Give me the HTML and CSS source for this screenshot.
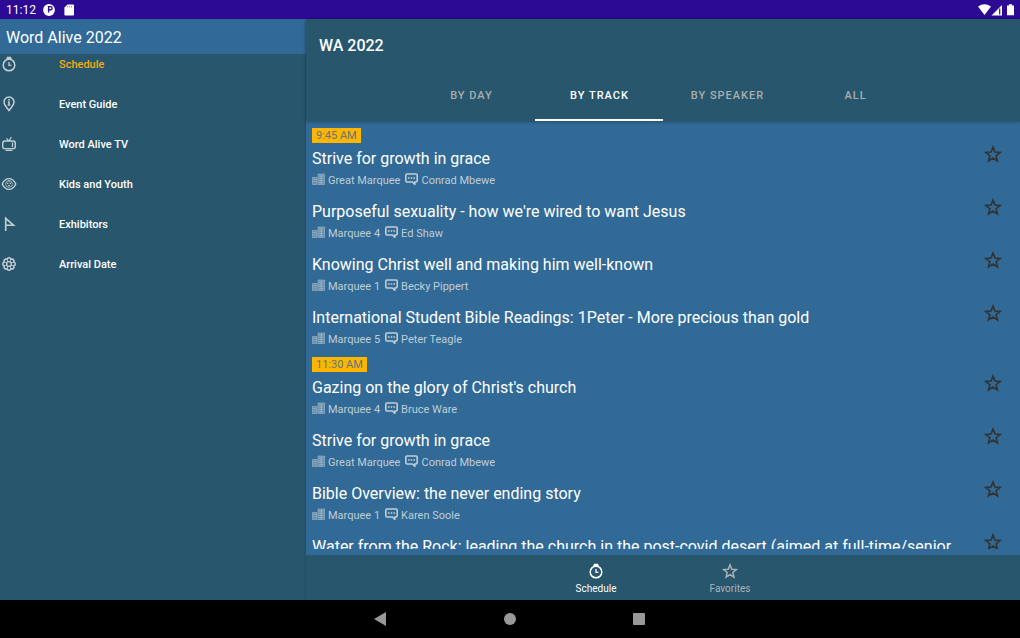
FILE: index.html
```html
<!DOCTYPE html>
<html lang="en">
<head>
  <meta charset="UTF-8">
  <meta name="viewport" content="width=device-width, initial-scale=1">
  <title>Word Alive 2022</title>
  <link rel="stylesheet" href="styles.css">
</head>
<body>

  <!-- ===== ICONS ===== -->
  <svg class="sprite" aria-hidden="true">
    <symbol id="i-clock" viewBox="0 0 16 16">
      <circle cx="8" cy="9" r="5.8" fill="none" stroke="currentColor" stroke-width="1.5"/>
      <path d="M6 .8h4l.8 2.2H5.200z" fill="currentColor"/>
      <path d="M8 6v3.400h2.400" fill="none" stroke="currentColor" stroke-width="1.3"/>
    </symbol>
    <symbol id="i-pin" viewBox="0 0 16 16">
      <path d="M8 14.500C5.600 11.400 3 9 3 6a5 5 0 0 1 10 0c0 3-2.600 5.400-5 8.500z" fill="none" stroke="currentColor" stroke-width="1.5"/>
      <path d="M7.200 3h1.600v1.500H7.200zM6.800 5.300h2v3.400h.6v1H6.600v-1h.6V6.300h-.4z" fill="currentColor"/>
    </symbol>
    <symbol id="i-tv" viewBox="0 0 16 16">
      <rect x="1.7" y="5" width="12.6" height="7.6" rx="2.2" fill="none" stroke="currentColor" stroke-width="1.4"/>
      <path d="M8 5L5.400 2.400M8 5l2.400-4M11.500 6.500v4.600M4.500 14.300h7" fill="none" stroke="currentColor" stroke-width="1.2"/>
    </symbol>
    <symbol id="i-eye" viewBox="0 0 16 16">
      <path d="M1.200 8C3 4.300 5.400 2.600 8 2.600S13 4.300 14.800 8C13 11.700 10.600 13.400 8 13.400S3 11.700 1.200 8z" fill="none" stroke="currentColor" stroke-width="1.4"/>
      <circle cx="8" cy="8" r="3.4" fill="none" stroke="currentColor" stroke-width=".7"/>
      <path d="M6 6.800h1.300v1.300H6zM8.700 6.800H10v1.300H8.700zM7.500 4h1v2h-1zM6.500 9h3L8 10.500z" fill="currentColor"/>
    </symbol>
    <symbol id="i-flag" viewBox="0 0 16 16">
      <path d="M4.700 15V2.300L12.500 9.200H4.700" fill="none" stroke="currentColor" stroke-width="1.6"/>
    </symbol>
    <symbol id="i-flower" viewBox="0 0 16 16">
      <path d="M6 3.200a2.100 2.100 0 0 1 4 0 2.100 2.100 0 0 1 2.800 2.800 2.100 2.100 0 0 1 0 4 2.100 2.100 0 0 1-2.800 2.800 2.100 2.100 0 0 1-4 0 2.100 2.100 0 0 1-2.800-2.800 2.100 2.100 0 0 1 0-4 2.100 2.100 0 0 1 2.800-2.800z" fill="none" stroke="currentColor" stroke-width="1.5"/>
      <circle cx="8" cy="8" r="2.4" fill="none" stroke="currentColor" stroke-width="1.4"/>
      <path d="M6 3.200l1 2.600M10 3.200L9 5.800M12.800 6l-2.600 1M12.800 10l-2.600-1M10 12.800l-1-2.600M6 12.800l1-2.600M3.200 10l2.600-1M3.200 6l2.600 1" stroke="currentColor" stroke-width=".8"/>
    </symbol>
    <symbol id="i-star" viewBox="0 0 24 24">
      <path d="M12 2.800l2.600 6.500 7 .5-5.400 4.500 1.700 6.900-5.900-3.800-5.900 3.800 1.700-6.900L2.400 9.800l7-.5z" fill="none" stroke="currentColor" stroke-width="2.2"/>
    </symbol>
    <symbol id="i-building" viewBox="0 0 13 12">
      <path d="M6 1h6.500v10.500H6zM.5 4.500H5v7H.5z" fill="currentColor" fill-opacity=".35" stroke="currentColor" stroke-opacity=".6" stroke-width=".8"/>
      <path d="M7 3h4.500M7 5.200h4.500M7 7.400h4.500M7 9.600h4.500M1.300 6.500h3M1.300 8.800h3M9.200 1.500v9.500" stroke="currentColor" stroke-opacity=".6" stroke-width=".8"/>
    </symbol>
    <symbol id="i-chat" viewBox="0 0 13 12">
      <path d="M2 1h9a1.200 1.200 0 0 1 1.200 1.200v5.600A1.200 1.200 0 0 1 11 9H9.800v2.300L7.300 9H2A1.200 1.200 0 0 1 .8 7.800V2.200A1.200 1.200 0 0 1 2 1z" fill="none" stroke="currentColor" stroke-width="1.6"/>
      <path d="M3 4.300h1.600v1.500H3zM5.700 4.300h1.600v1.500H5.700zM8.400 4.300H10v1.500H8.400z" fill="currentColor"/>
    </symbol>
  </svg>

  <!-- ===== STATUS BAR ===== -->
  <div class="status-bar">
    <span class="time">11:12</span>
    <svg class="status-icon" viewBox="0 0 12 12">
      <circle cx="6" cy="6" r="5.9" fill="#fff"/>
      <path d="M5.600 8.500V2.600h1.900a1.600 1.600 0 0 1 0 3.200h-1.900" fill="none" stroke="#2c0a94" stroke-width="1.4"/>
    </svg>
    <svg class="status-icon" viewBox="0 0 12 12">
      <path d="M4.500.5h5.700a.8.8 0 0 1 .8.8v9.400a.8.8 0 0 1-.8.8H2.200a.8.8 0 0 1-.8-.8V3.600z" fill="#fff"/>
      <path d="M4.500 2v1.500M6.500 2v1.500M8.500 2v1.500" stroke="#2c0a94" stroke-opacity=".6" stroke-width=".7"/>
    </svg>
    <svg class="signals" viewBox="0 0 38 12">
      <path d="M0 2.500Q6.500-1.800 13 2.500L6.500 11z" fill="#fff"/>
      <path d="M24 1v10.500H13.500z" fill="#fff"/>
      <path d="M21.700 4.500v6" stroke="#2c0a94" stroke-width="1.2"/>
      <path d="M29 1.500h2V.3h3v1.200h2V11.200h-7z" fill="#fff"/>
    </svg>
  </div>

  <div class="app">

    <!-- ===== SIDE MENU ===== -->
    <aside class="sidebar">
      <h1>Word Alive 2022</h1>
      <nav class="menu">
        <a href="#schedule" class="active"><svg><use href="#i-clock"/></svg>Schedule</a>
        <a href="#guide"><svg><use href="#i-pin"/></svg>Event Guide</a>
        <a href="#tv"><svg><use href="#i-tv"/></svg>Word Alive TV</a>
        <a href="#kids"><svg><use href="#i-eye"/></svg>Kids and Youth</a>
        <a href="#exhibitors"><svg><use href="#i-flag"/></svg>Exhibitors</a>
        <a href="#arrival"><svg><use href="#i-flower"/></svg>Arrival Date</a>
      </nav>
    </aside>

    <!-- ===== SCHEDULE ===== -->
    <main class="content">
      <header class="toolbar">
        <h2>WA 2022</h2>
        <div class="tabs" role="tablist">
          <button type="button" role="tab">BY DAY</button>
          <button type="button" role="tab" class="active" aria-selected="true">BY TRACK</button>
          <button type="button" role="tab">BY SPEAKER</button>
          <button type="button" role="tab">ALL</button>
        </div>
      </header>

      <div class="list-area">
        <div class="list">
          <time class="slot">9:45 AM</time>
          <article class="session">
            <div class="info">
              <h3>Strive for growth in grace</h3>
              <p><svg><use href="#i-building"/></svg>Great Marquee<svg class="chat"><use href="#i-chat"/></svg>Conrad Mbewe</p>
            </div>
            <button type="button" class="star" aria-label="Add to favorites"><svg><use href="#i-star"/></svg></button>
          </article>
          <article class="session">
            <div class="info">
              <h3>Purposeful sexuality - how we're wired to want Jesus</h3>
              <p><svg><use href="#i-building"/></svg>Marquee 4<svg class="chat"><use href="#i-chat"/></svg>Ed Shaw</p>
            </div>
            <button type="button" class="star" aria-label="Add to favorites"><svg><use href="#i-star"/></svg></button>
          </article>
          <article class="session">
            <div class="info">
              <h3>Knowing Christ well and making him well-known</h3>
              <p><svg><use href="#i-building"/></svg>Marquee 1<svg class="chat"><use href="#i-chat"/></svg>Becky Pippert</p>
            </div>
            <button type="button" class="star" aria-label="Add to favorites"><svg><use href="#i-star"/></svg></button>
          </article>
          <article class="session">
            <div class="info">
              <h3>International Student Bible Readings: 1Peter - More precious than gold</h3>
              <p><svg><use href="#i-building"/></svg>Marquee 5<svg class="chat"><use href="#i-chat"/></svg>Peter Teagle</p>
            </div>
            <button type="button" class="star" aria-label="Add to favorites"><svg><use href="#i-star"/></svg></button>
          </article>

          <time class="slot">11:30 AM</time>
          <article class="session">
            <div class="info">
              <h3>Gazing on the glory of Christ's church</h3>
              <p><svg><use href="#i-building"/></svg>Marquee 4<svg class="chat"><use href="#i-chat"/></svg>Bruce Ware</p>
            </div>
            <button type="button" class="star" aria-label="Add to favorites"><svg><use href="#i-star"/></svg></button>
          </article>
          <article class="session">
            <div class="info">
              <h3>Strive for growth in grace</h3>
              <p><svg><use href="#i-building"/></svg>Great Marquee<svg class="chat"><use href="#i-chat"/></svg>Conrad Mbewe</p>
            </div>
            <button type="button" class="star" aria-label="Add to favorites"><svg><use href="#i-star"/></svg></button>
          </article>
          <article class="session">
            <div class="info">
              <h3>Bible Overview: the never ending story</h3>
              <p><svg><use href="#i-building"/></svg>Marquee 1<svg class="chat"><use href="#i-chat"/></svg>Karen Soole</p>
            </div>
            <button type="button" class="star" aria-label="Add to favorites"><svg><use href="#i-star"/></svg></button>
          </article>
          <article class="session">
            <div class="info">
              <h3>Water from the Rock: leading the church in the post-covid desert (aimed at full-time/senior</h3>
            </div>
            <button type="button" class="star" aria-label="Add to favorites"><svg><use href="#i-star"/></svg></button>
          </article>
        </div>
      </div>

      <nav class="bottom-nav">
        <a href="#schedule" class="active"><svg><use href="#i-clock"/></svg>Schedule</a>
        <a href="#favorites"><svg><use href="#i-star"/></svg>Favorites</a>
      </nav>
    </main>
  </div>

  <!-- ===== SYSTEM BUTTONS ===== -->
  <div class="system-bar">
    <button type="button" aria-label="Back"><svg viewBox="0 0 14 14"><path d="M12 0v14L0 7z"/></svg></button>
    <button type="button" aria-label="Home"><svg viewBox="0 0 14 14"><circle cx="7" cy="7" r="6"/></svg></button>
    <button type="button" aria-label="Recent apps"><svg viewBox="0 0 14 14"><rect x="1" y="1" width="12" height="12" rx="1"/></svg></button>
  </div>

</body>
</html>
```
FILE: styles.css
```css
/* ===== BASE ===== */
* {
  box-sizing: border-box;
}

body {
  margin: 0;
  height: 100vh;
  display: flex;
  flex-direction: column;
  overflow: hidden;
  font-family: Roboto, sans-serif;
  background: #28566d;
  color: #fff;
}

h1, h2, h3, p {
  margin: 0;
  font-weight: 400;
}

a {
  color: inherit;
  text-decoration: none;
}

button {
  padding: 0;
  border: none;
  background: none;
  color: inherit;
  font-family: inherit;
  cursor: pointer;
}

.sprite {
  display: none;
}

/* ===== STATUS BAR ===== */
.status-bar {
  display: flex;
  align-items: center;
  flex: none;
  height: 19px;
  padding: 0 4px 0 6px;
  background: #2c0a94;
}

.time {
  margin-right: 7px;
  font-size: 12px;
}

.status-icon {
  width: 12px;
  height: 12px;
  margin-right: 8px;
}

.signals {
  width: 38px;
  height: 12px;
  margin-left: auto;
}

/* ===== SIDE MENU ===== */
.app {
  flex: 1;
  display: flex;
  min-height: 0;
}

.sidebar {
  width: 30%;
}

.sidebar h1 {
  padding: 2px 6px 0;
  font-size: 16px;
  line-height: 33px;
  background: #316a96;
}

.menu {
  display: flex;
  flex-direction: column;
  gap: 20px;
}

.menu a {
  display: flex;
  align-items: center;
  gap: 42px;
  height: 20px;
  padding-left: 1px;
  font-size: 11px;
  font-weight: 500;
}

.menu svg {
  width: 16px;
  height: 16px;
  color: #c5cfd3;
}

.menu .active {
  color: #f0ac12;
}

/* ===== TOOLBAR + TABS ===== */
.content {
  flex: 1;
  min-width: 0;
  display: flex;
  flex-direction: column;
  box-shadow: 0 0 3px rgba(0, 0, 0, 0.2);
}

.toolbar {
  z-index: 1;
  box-shadow: 0 1px 3px rgba(0, 0, 0, 0.3);
}

.toolbar h2 {
  padding-left: 13px;
  font-size: 16px;
  font-weight: 500;
  line-height: 53px;
}

.tabs {
  display: flex;
  justify-content: center;
}

.tabs button {
  width: 128px;
  height: 49px;
  padding-left: 1px;
  border-bottom: 2px solid transparent;
  font-size: 11px;
  font-weight: 500;
  letter-spacing: 1px;
  color: #a9afb1;
}

.tabs .active {
  color: #fff;
  border-bottom-color: #fff;
}

/* ===== SESSIONS ===== */
.list-area {
  flex: 1;
  min-height: 0;
  display: flex;
  padding: 7px 6px 6px;
  background: #316a96;
}

.list {
  flex: 1;
  overflow: hidden;
}

.slot {
  display: block;
  width: fit-content;
  margin-bottom: 2px;
  padding: 0 4px;
  font-size: 11px;
  line-height: 15px;
  background: #ffb600;
  color: #60747b;
}

.session {
  display: flex;
  align-items: flex-start;
  justify-content: space-between;
  padding-bottom: 10px;
}

.session h3 {
  font-size: 16px;
  line-height: 28px;
  white-space: nowrap;
}

.session p {
  display: flex;
  align-items: center;
  gap: 3px;
  font-size: 11px;
  line-height: 15px;
  color: #bfcdd8;
}

.session p svg {
  width: 13px;
  height: 12px;
  margin-bottom: 3px;
}

.session .chat {
  margin-left: 2px;
}

.star {
  flex: none;
  margin-right: 12px;
  color: #333;
}

.star svg {
  display: block;
  width: 18px;
  height: 18px;
}

/* ===== BOTTOM NAV ===== */
.bottom-nav {
  display: flex;
  justify-content: center;
  height: 45px;
}

.bottom-nav a {
  display: flex;
  flex-direction: column;
  align-items: center;
  gap: 4px;
  width: 134px;
  padding-top: 8px;
  font-size: 10px;
  line-height: 12px;
  color: #a9b3b8;
}

.bottom-nav svg {
  width: 16px;
  height: 16px;
}

.bottom-nav .active {
  color: #fff;
}

/* ===== SYSTEM BUTTONS ===== */
.system-bar {
  display: flex;
  align-items: center;
  justify-content: center;
  gap: 115px;
  flex: none;
  height: 38px;
  background: #000;
}

.system-bar svg {
  display: block;
  width: 14px;
  height: 14px;
  fill: #999;
}
```
